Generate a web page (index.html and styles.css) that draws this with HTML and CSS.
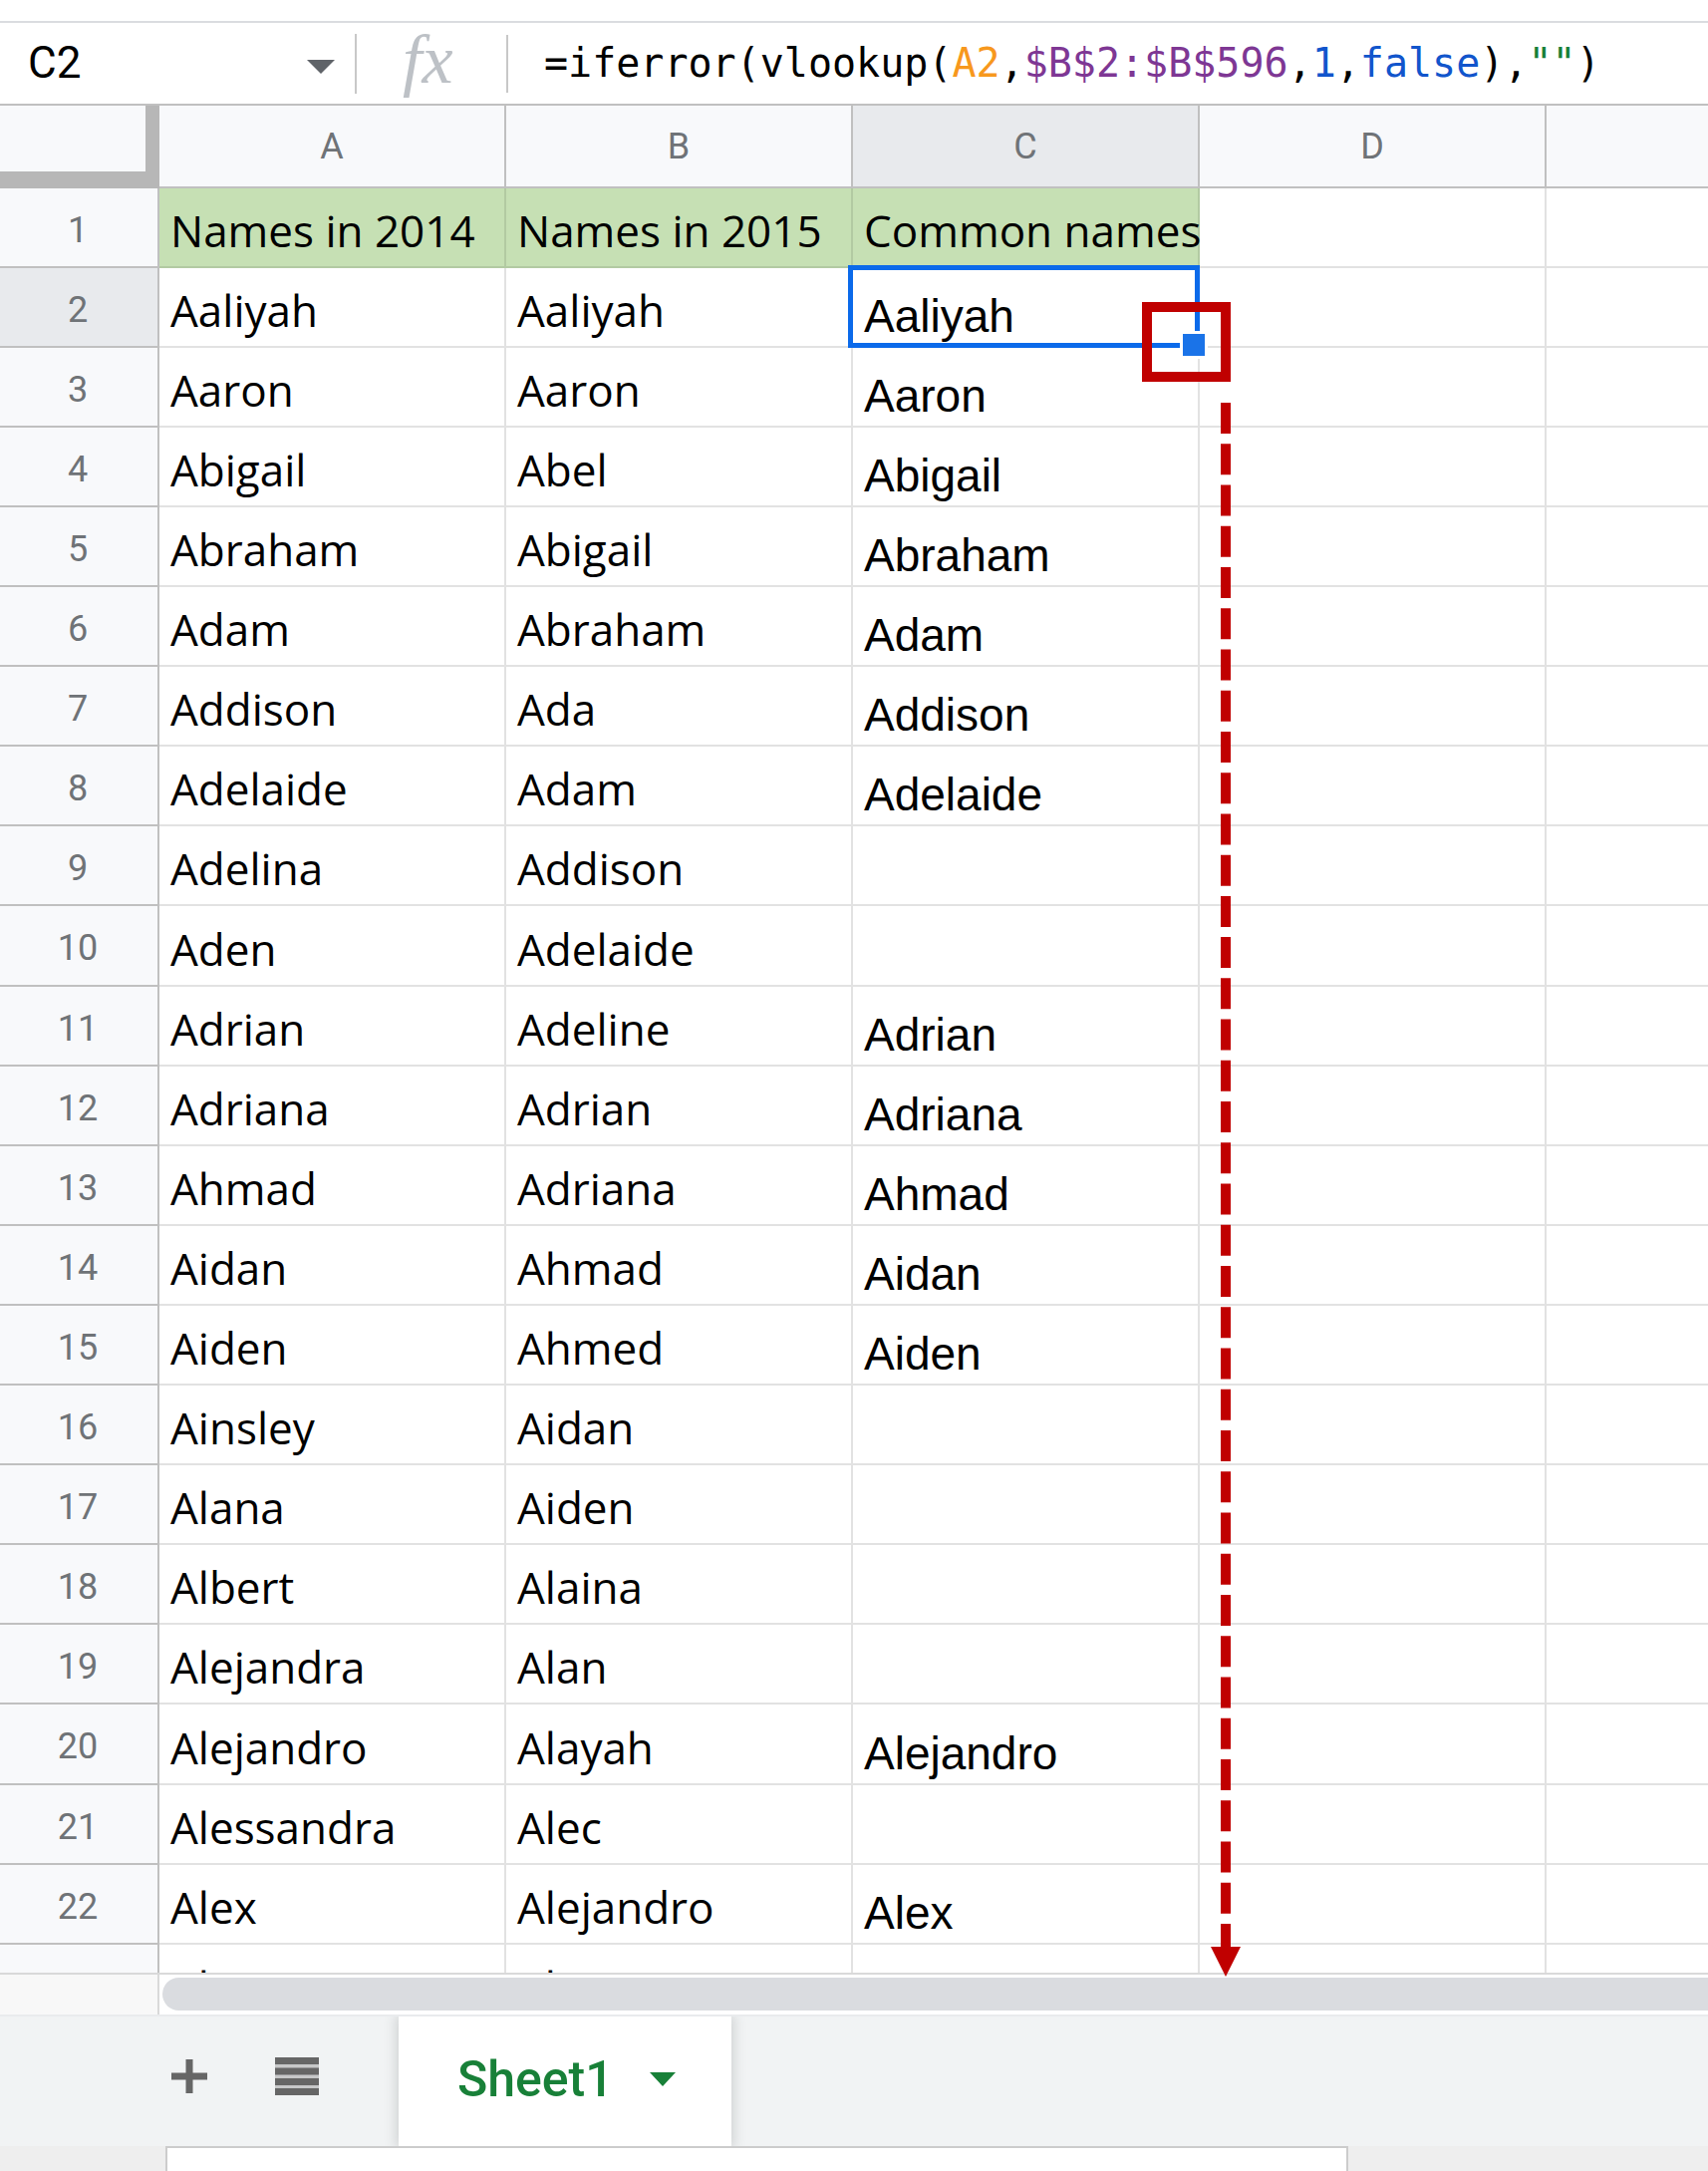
FILE: index.html
```
<!DOCTYPE html>
<html lang="en">
  <head>
    <meta charset="UTF-8" />
    <meta name="viewport" content="width=device-width, initial-scale=1.0" />
    <title>Common names</title>

    <link rel="stylesheet" href="styles.css">
  </head>
  <body>
    <header class="formula-bar">
      <div class="name-box">
        <input class="name-input" type="text" value="C2" aria-label="Name box" />
        <button class="name-toggle" aria-label="Named ranges">
          <svg width="28" height="14" viewBox="0 0 28 14"><path d="M0 0h28L14 14z" fill="#5f6368" /></svg>
        </button>
      </div>
      <span class="fx">fx</span>
      <div class="formula" role="textbox" aria-label="Formula">=iferror(vlookup(<span class="ref-orange">A2</span>,<span class="ref-purple">$B$2:$B$596</span>,<span class="literal">1</span>,<span class="literal">false</span>),<span class="string">""</span>)</div>
    </header>

    <main class="sheet">
      <div class="viewport">
        <table class="grid">
          <colgroup>
            <col class="col-index" />
            <col class="col-data" />
            <col class="col-data" />
            <col class="col-data" />
            <col class="col-data" />
            <col />
          </colgroup>
          <thead>
            <tr>
              <td class="corner"></td>
              <th scope="col">A</th>
              <th scope="col">B</th>
              <th scope="col" class="active">C</th>
              <th scope="col">D</th>
              <th scope="col"></th>
            </tr>
          </thead>
          <tbody>
            <tr class="titles"><th scope="row">1</th><td>Names in 2014</td><td>Names in 2015</td><td>Common names</td><td></td><td></td></tr>
            <tr>
              <th scope="row" class="active">2</th>
              <td>Aaliyah</td>
              <td>Aaliyah</td>
              <td class="result selected">Aaliyah<span class="selection"></span><span class="fill-handle"></span><span class="highlight"></span></td>
              <td></td>
              <td></td>
            </tr>
            <tr><th scope="row">3</th><td>Aaron</td><td>Aaron</td><td class="result">Aaron</td><td></td><td></td></tr>
            <tr><th scope="row">4</th><td>Abigail</td><td>Abel</td><td class="result">Abigail</td><td></td><td></td></tr>
            <tr><th scope="row">5</th><td>Abraham</td><td>Abigail</td><td class="result">Abraham</td><td></td><td></td></tr>
            <tr><th scope="row">6</th><td>Adam</td><td>Abraham</td><td class="result">Adam</td><td></td><td></td></tr>
            <tr><th scope="row">7</th><td>Addison</td><td>Ada</td><td class="result">Addison</td><td></td><td></td></tr>
            <tr><th scope="row">8</th><td>Adelaide</td><td>Adam</td><td class="result">Adelaide</td><td></td><td></td></tr>
            <tr><th scope="row">9</th><td>Adelina</td><td>Addison</td><td class="result"></td><td></td><td></td></tr>
            <tr><th scope="row">10</th><td>Aden</td><td>Adelaide</td><td class="result"></td><td></td><td></td></tr>
            <tr><th scope="row">11</th><td>Adrian</td><td>Adeline</td><td class="result">Adrian</td><td></td><td></td></tr>
            <tr><th scope="row">12</th><td>Adriana</td><td>Adrian</td><td class="result">Adriana</td><td></td><td></td></tr>
            <tr><th scope="row">13</th><td>Ahmad</td><td>Adriana</td><td class="result">Ahmad</td><td></td><td></td></tr>
            <tr><th scope="row">14</th><td>Aidan</td><td>Ahmad</td><td class="result">Aidan</td><td></td><td></td></tr>
            <tr><th scope="row">15</th><td>Aiden</td><td>Ahmed</td><td class="result">Aiden</td><td></td><td></td></tr>
            <tr><th scope="row">16</th><td>Ainsley</td><td>Aidan</td><td class="result"></td><td></td><td></td></tr>
            <tr><th scope="row">17</th><td>Alana</td><td>Aiden</td><td class="result"></td><td></td><td></td></tr>
            <tr><th scope="row">18</th><td>Albert</td><td>Alaina</td><td class="result"></td><td></td><td></td></tr>
            <tr><th scope="row">19</th><td>Alejandra</td><td>Alan</td><td class="result"></td><td></td><td></td></tr>
            <tr><th scope="row">20</th><td>Alejandro</td><td>Alayah</td><td class="result">Alejandro</td><td></td><td></td></tr>
            <tr><th scope="row">21</th><td>Alessandra</td><td>Alec</td><td class="result"></td><td></td><td></td></tr>
            <tr><th scope="row">22</th><td>Alex</td><td>Alejandro</td><td class="result">Alex</td><td></td><td></td></tr>
            <tr><th scope="row"></th><td>Alexa</td><td>Alexa</td><td class="result"></td><td></td><td></td></tr>
          </tbody>
        </table>
      </div>
      <svg class="drag-arrow" width="30" height="1579" viewBox="0 0 30 1579">
        <path d="M15 0V1550" stroke="#c00000" stroke-width="10" stroke-dasharray="31 10.24" />
        <path d="M0 1549h30L15 1579z" fill="#c00000" />
      </svg>
    </main>

    <div class="scrollbar">
      <div class="scroll-gutter"></div>
      <div class="scroll-track"><div class="scroll-thumb"></div></div>
    </div>

    <nav class="tabs">
      <button class="tool" aria-label="Add sheet">
        <svg width="36" height="36" viewBox="0 0 36 36"><path d="M18 1v34M0 18h36" stroke="#666" stroke-width="7" /></svg>
      </button>
      <button class="tool" aria-label="All sheets">
        <svg width="44" height="38" viewBox="0 0 44 38">
          <path d="M0 0h44v38H0z" fill="#c6c7c8" />
          <path d="M0 3.5h44M0 14h44M0 24.500h44M0 34.500h44" stroke="#666" stroke-width="7" />
        </svg>
      </button>
      <button class="tab">
        Sheet1
        <svg width="26" height="14" viewBox="0 0 26 14"><path d="M0 0h26L13 14z" fill="#188038" /></svg>
      </button>
    </nav>

    <footer class="status">
      <div class="status-panel"></div>
    </footer>
  </body>
</html>
```
FILE: styles.css
```
:root {
  --line: #e2e2e2;
  --header-line: #c0c0c0;
  --header-bg: #f8f9fb;
  --active-bg: #e8eaed;
  --title-bg: #c6e0b4;
  --title-line: #b2caa2;
  --select: #0b6aea;
  --red: #c00000;
}

* {
  margin: 0;
  padding: 0;
  box-sizing: border-box;
}

body {
  height: 100vh;
  display: flex;
  flex-direction: column;
  overflow: hidden;
  background-color: #fff;
  font-family: Roboto, sans-serif;
  color: #000;
}

button,
input {
  border: none;
  background: none;
  font: inherit;
  color: inherit;
}

button {
  cursor: pointer;
}

svg {
  display: block;
}

/* Formula bar */

.formula-bar {
  flex: none;
  height: 85px;
  margin-top: 21px;
  display: flex;
  align-items: center;
  border-top: 2px solid #dadce0;
  border-bottom: 2px solid var(--header-line);
}

.name-box {
  width: 358px;
  height: 60px;
  padding: 0 20px 2px 28px;
  display: flex;
  align-items: center;
  border-right: 2px solid #c8c8c8;
}

.name-input {
  flex: 1;
  min-width: 0;
  font-size: 44px;
}

.name-toggle {
  padding-top: 8px;
}

.fx {
  width: 152px;
  height: 58px;
  padding-left: 46px;
  border-right: 2px solid #c8c8c8;
  font-family: 'Liberation Serif', serif;
  font-size: 70px;
  font-style: italic;
  line-height: 50px;
  color: #bdc1c6;
}

.formula {
  padding: 0 0 2px 36px;
  font-family: 'DejaVu Sans Mono', monospace;
  font-size: 40px;
  white-space: nowrap;
}

.ref-orange {
  color: #f7981d;
}

.ref-purple {
  color: #7e3794;
}

.literal {
  color: #1155cc;
}

.string {
  color: #188038;
}

/* Grid */

.sheet {
  position: relative;
  flex: 1;
  min-height: 0;
}

.viewport {
  height: 100%;
  overflow: hidden;
  border-bottom: 2px solid #d9d9d9;
}

.grid {
  width: 100%;
  table-layout: fixed;
  border-collapse: separate;
  border-spacing: 0;
}

.col-index {
  width: 160px;
}

.col-data {
  width: 348px;
}

.grid th {
  background-color: var(--header-bg);
  border-right: 2px solid var(--header-line);
  border-bottom: 2px solid var(--header-line);
  font-size: 36px;
  font-weight: 400;
  color: #6f7377;
}

.grid tbody th {
  padding: 5px 2px 0 0;
}

.grid th.active {
  background-color: var(--active-bg);
}

.grid thead tr {
  height: 83px;
}

.grid .corner {
  background-color: var(--header-bg);
  border-right: 14px solid #b7b7b7;
  border-bottom: 17px solid #b7b7b7;
}

.grid tbody tr {
  height: 80px;
}

.grid tbody tr:nth-child(10n) {
  height: 81px;
}

.grid td {
  padding: 0 0 8px 11px;
  border-right: 2px solid var(--line);
  border-bottom: 2px solid var(--line);
  font-family: 'Open Sans', sans-serif;
  font-size: 44px;
  line-height: 56px;
  vertical-align: bottom;
  white-space: nowrap;
}

.grid th:last-child,
.grid td:last-child {
  border-right: none;
}

.grid .titles td:nth-child(-n + 4) {
  background-color: var(--title-bg);
  border-color: var(--title-line);
}

.grid .result {
  padding-bottom: 2px;
  font-family: 'Liberation Sans', sans-serif;
  font-size: 46px;
}

.selected {
  position: relative;
}

.selection {
  position: absolute;
  inset: -3px -2px -2px -5px;
  border: 5px solid var(--select);
}

.fill-handle {
  position: absolute;
  right: -10px;
  bottom: -13px;
  width: 28px;
  height: 28px;
  background-color: #1a73e8;
  border: 3px solid #fff;
}

.highlight {
  position: absolute;
  right: -33px;
  bottom: -36px;
  width: 89px;
  height: 80px;
  border: 10px solid var(--red);
}

.drag-arrow {
  position: absolute;
  top: 298px;
  left: 1215px;
}

/* Horizontal scrollbar */

.scrollbar {
  flex: none;
  height: 40px;
  display: flex;
}

.scroll-gutter {
  width: 160px;
  background-color: #f8f8f8;
  border-right: 2px solid #d9d9d9;
}

.scroll-track {
  flex: 1;
  padding: 3px 0 4px 3px;
}

.scroll-thumb {
  height: 100%;
  background-color: #dadce0;
  border-radius: 17px 0 0 17px;
}

/* Sheet tabs */

.tabs {
  flex: none;
  height: 132px;
  padding-left: 172px;
  display: flex;
  align-items: stretch;
  overflow: hidden;
  background-color: #f1f3f4;
  border-top: 2px solid #e9ebed;
}

.tool {
  padding-bottom: 10px;
  margin-right: 68px;
  display: flex;
  align-items: center;
}

.tool + .tab {
  margin-left: 12px;
}

.tab {
  padding: 0 56px 4px 59px;
  display: flex;
  align-items: center;
  gap: 36px;
  background-color: #fff;
  box-shadow: 0 0 12px 2px rgba(60, 64, 67, 0.2);
  font-size: 50px;
  font-weight: 500;
  color: #188038;
}

.status {
  flex: none;
  height: 25px;
  padding: 0 361px 0 166px;
  background-color: #eee;
}

.status-panel {
  height: 100%;
  background-color: #fff;
  border: 2px solid #ccc;
  border-bottom: none;
}
```
